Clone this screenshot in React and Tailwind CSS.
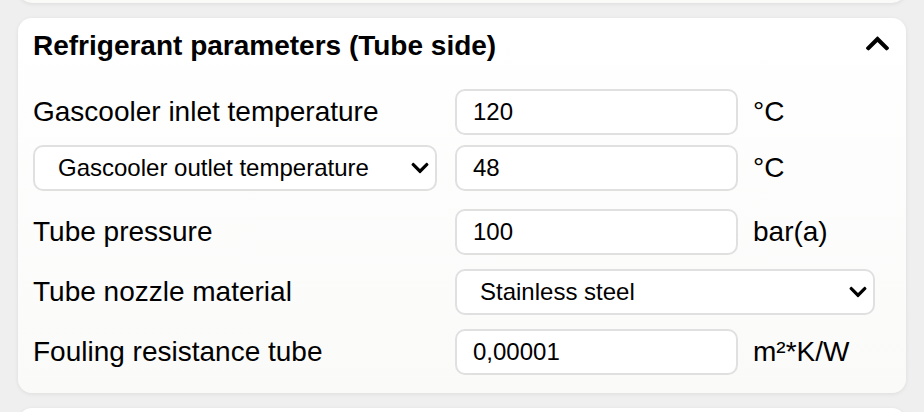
import React from "react";
import { FaChevronUp, FaChevronDown } from "react-icons/fa";

const font = { fontFamily: '"Liberation Sans", Arial, sans-serif' };

const Field = ({ value }) => (
  <input
    defaultValue={value}
    className="w-[283px] h-[46px] rounded-[10px] border-2 border-[#e0e0e0] bg-white px-[16px] text-[24px] text-black outline-none"
  />
);

const Select = ({ value, width }) => (
  <div className={`relative ${width}`}>
    <select
      defaultValue={value}
      className="w-full h-[46px] appearance-none rounded-[10px] border-2 border-[#e0e0e0] bg-white pl-[23px] pr-[40px] text-[24px] text-black outline-none"
    >
      <option>{value}</option>
    </select>
    <FaChevronDown className="pointer-events-none absolute right-[7px] top-1/2 -translate-y-1/2 text-[20px] text-black" />
  </div>
);

const Row = ({ label, children, unit, className }) => (
  <div className={`flex items-center ${className}`}>
    <div className="w-[422px] shrink-0">{label}</div>
    {children}
    {unit && <div className="ml-[15px] text-[28px] text-black">{unit}</div>}
  </div>
);

export default function App() {
  return (
    <div style={font} className="w-[924px] h-[412px] overflow-hidden bg-[#efefef]">
      <div className="flex flex-col gap-[15px] px-[18px] -mt-[37px]">
        <div className="h-[40px] rounded-[14px] bg-[#fafaf9] shadow-[0_1px_4px_rgba(0,0,0,0.08)]" />

        <section className="rounded-[14px] bg-gradient-to-b from-white to-[#fafaf9] shadow-[0_1px_4px_rgba(0,0,0,0.08)] pl-[15px] pr-[31px] pb-[18px]">
          <div className="flex h-[56px] items-center justify-between">
            <h2 className="text-[28px] font-bold text-black">Refrigerant parameters (Tube side)</h2>
            <FaChevronUp className="-mr-[16px] mb-[6px] text-[27px] text-black" />
          </div>

          <Row className="mt-[15px]" label={<span className="text-[28px] text-black">Gascooler inlet temperature</span>} unit="°C">
            <Field value="120" />
          </Row>

          <Row className="mt-[10px]" label={<Select value="Gascooler outlet temperature" width="w-[404px]" />} unit="°C">
            <Field value="48" />
          </Row>

          <Row className="mt-[18px]" label={<span className="text-[28px] text-black">Tube pressure</span>} unit="bar(a)">
            <Field value="100" />
          </Row>

          <Row className="mt-[14px]" label={<span className="text-[28px] text-black">Tube nozzle material</span>}>
            <Select value="Stainless steel" width="w-[420px]" />
          </Row>

          <Row className="mt-[14px]" label={<span className="text-[28px] text-black">Fouling resistance tube</span>} unit="m²*K/W">
            <Field value="0,00001" />
          </Row>
        </section>

        <div className="h-[40px] rounded-[14px] bg-white shadow-[0_1px_4px_rgba(0,0,0,0.08)]" />
      </div>
    </div>
  );
}
